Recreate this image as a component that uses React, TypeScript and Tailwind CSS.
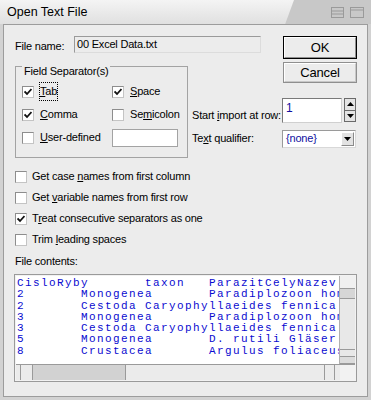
import type { ReactNode } from "react";

const rows = [
  "CisloRyby       taxon   ParazitCelyNazev",
  "2       Monogenea       Paradiplozoon homoion",
  "2       Cestoda Caryophyllaeides fennica",
  "3       Monogenea       Paradiplozoon homoion",
  "3       Cestoda Caryophyllaeides fennica",
  "5       Monogenea       D. rutili Gläser",
  "8       Crustacea       Argulus foliaceus",
];

function Check({ checked }: { checked?: boolean }) {
  return (
    <span className="flex h-[12px] w-[12px] shrink-0 items-center justify-center border border-t-[#8d8d8d] border-l-[#8d8d8d] border-r-[#c4c4c4] border-b-[#c4c4c4] bg-white">
      {checked ? (
        <svg width="8" height="8" viewBox="0 0 8 8">
          <path d="M0.5 3.5 L3 6 L7.5 1" fill="none" stroke="#111" strokeWidth="1.8" />
        </svg>
      ) : null}
    </span>
  );
}

function U({ children }: { children: ReactNode }) {
  return <span className="underline underline-offset-[1px]">{children}</span>;
}

function Button({ children, def }: { children: ReactNode; def?: boolean }) {
  return (
    <div
      className={
        def
          ? "flex h-[23px] w-[74px] items-center justify-center border border-black bg-[#ececec] text-[13px]"
          : "flex h-[21px] w-[74px] items-center justify-center border border-[#8f8f8f] bg-[#ececec] text-[13px]"
      }
    >
      <div
        className={
          def
            ? "flex h-full w-full items-center justify-center border border-t-white border-l-white border-r-[#8f8f8f] border-b-[#8f8f8f]"
            : "flex h-full w-full items-center justify-center border border-t-white border-l-white border-r-[#c8c8c8] border-b-[#c8c8c8]"
        }
      >
        {children}
      </div>
    </div>
  );
}

export default function App() {
  return (
    <div className="flex h-[400px] w-[371px] flex-col overflow-hidden bg-[#d2d2d2] font-['Liberation_Sans',Arial,sans-serif] text-[11px] tracking-[-0.2px] text-black">
      {/* title bar */}
      <div className="flex h-[24px] shrink-0 bg-[#c8c8c8]">
        <div className="flex w-[294px] items-center bg-gradient-to-b from-[#f4f4f4] to-[#e0e0e0] pl-[7px] text-[12.5px] tracking-normal [clip-path:polygon(0_0,100%_0,97%_100%,0_100%)]">
          Open Text File
        </div>
        <div className="flex flex-1 items-center justify-end gap-[6px] pr-[7px] pt-[1px]">
          <svg width="13" height="11" viewBox="0 0 13 11">
            <rect x="0.5" y="0.5" width="12" height="10" fill="none" stroke="#9a9a9a" />
            <path d="M0.5 4 H12.5 M0.5 7 H12.5" stroke="#9a9a9a" />
          </svg>
          <svg width="14" height="11" viewBox="0 0 14 11">
            <rect x="0.5" y="0.5" width="13" height="10" fill="none" stroke="#9a9a9a" />
            <path d="M0.5 3 H13.5" stroke="#9a9a9a" />
          </svg>
        </div>
      </div>

      {/* body */}
      <div className="mx-[3px] mb-[3px] flex flex-1 flex-col border border-[#9c9c9c] bg-[#ececec] pl-[11px] pr-[10px] pt-[11px]">
        <div className="flex items-start">
          <span className="w-[59px] pt-[2px]">File name:</span>
          <div className="flex h-[17px] w-[187px] items-center border border-t-[#9a9a9a] border-l-[#9a9a9a] border-r-[#dcdcdc] border-b-[#dcdcdc] bg-[#ececec] pl-[2px]">
            00 Excel Data.txt
          </div>
          <div className="ml-auto">
            <Button def>OK</Button>
          </div>
        </div>

        <div className="flex">
          {/* group box */}
          <div className="relative mt-[7px] h-[92px] w-[173px] border border-[#a3a3a3] pl-[6px] pt-[13px]">
            <span className="absolute left-[6px] top-[-2px] bg-[#ececec] px-[2px] leading-[12px]">
              Field Separator(s)
            </span>
            <div className="grid grid-cols-[90px_auto]">
              <div className="flex h-[23px] items-center gap-[6px]">
                <Check checked />
                <span className="outline outline-1 outline-dotted outline-offset-0 outline-black">
                  <U>T</U>ab
                </span>
              </div>
              <div className="flex h-[23px] items-center gap-[6px]">
                <Check checked />
                <span>
                  <U>S</U>pace
                </span>
              </div>
              <div className="flex h-[23px] items-center gap-[6px]">
                <Check checked />
                <span>
                  <U>C</U>omma
                </span>
              </div>
              <div className="flex h-[23px] items-center gap-[6px]">
                <Check />
                <span>
                  Se<U>m</U>icolon
                </span>
              </div>
              <div className="flex h-[23px] items-center gap-[6px]">
                <Check />
                <span>
                  <U>U</U>ser-defined
                </span>
              </div>
              <div className="flex h-[23px] items-center">
                <div className="h-[18px] w-[66px] border border-[#a3a3a3] bg-white" />
              </div>
            </div>
          </div>

          {/* right column */}
          <div className="flex flex-1 flex-col">
            <div className="mt-[3px] self-end">
              <Button>Cancel</Button>
            </div>
            <div className="ml-[4px] mt-[15px] flex items-start">
              <span className="w-[90px] whitespace-nowrap pt-[9px]">
                Start <U>i</U>mport at row:
              </span>
              <div className="h-[25px] w-[60px] border border-t-[#7a7a7a] border-l-[#7a7a7a] border-r-[#d0d0d0] border-b-[#d0d0d0] bg-white pl-[3px] text-[12px] text-[#1010a0]">
                1
              </div>
              <div className="ml-[2px] flex h-[24px] w-[12px] flex-col border border-[#6a6a6a] bg-[#e4e4e4]">
                <div className="flex flex-1 items-center justify-center border-b border-[#6a6a6a]">
                  <svg width="7" height="4" viewBox="0 0 7 4">
                    <path d="M0 4 L3.5 0 L7 4 Z" fill="#000" />
                  </svg>
                </div>
                <div className="flex flex-1 items-center justify-center">
                  <svg width="7" height="4" viewBox="0 0 7 4">
                    <path d="M0 0 L3.5 4 L7 0 Z" fill="#000" />
                  </svg>
                </div>
              </div>
            </div>
            <div className="ml-[4px] mt-[6px] flex items-center">
              <span className="w-[90px] whitespace-nowrap">
                Te<U>x</U>t qualifier:
              </span>
              <div className="flex h-[18px] w-[74px] items-center border border-t-[#9a9a9a] border-l-[#9a9a9a] border-r-[#d8d8d8] border-b-[#d8d8d8] bg-white">
                <span className="flex-1 pl-[3px] text-[#1010a0]">{"{none}"}</span>
                <div className="mr-[1px] flex h-[14px] w-[13px] items-center justify-center border border-t-white border-l-white border-r-[#8a8a8a] border-b-[#8a8a8a] bg-[#e2e2e2]">
                  <svg width="7" height="4" viewBox="0 0 7 4">
                    <path d="M0 0 L3.5 4 L7 0 Z" fill="#000" />
                  </svg>
                </div>
              </div>
            </div>
          </div>
        </div>

        {/* option checkboxes */}
        <div className="mt-[8px] flex flex-col">
          <div className="flex h-[21px] items-center gap-[5px]">
            <Check />
            <span>
              Get case <U>n</U>ames from first column
            </span>
          </div>
          <div className="flex h-[21px] items-center gap-[5px]">
            <Check />
            <span>
              Get <U>v</U>ariable names from first row
            </span>
          </div>
          <div className="flex h-[21px] items-center gap-[5px]">
            <Check checked />
            <span>
              T<U>r</U>eat consecutive separators as one
            </span>
          </div>
          <div className="flex h-[21px] items-center gap-[5px]">
            <Check />
            <span>
              Trim <U>l</U>eading spaces
            </span>
          </div>
        </div>

        <div className="mt-[4px] leading-[14px]">File contents:</div>

        {/* file contents */}
        <div className="-ml-[1px] mt-[6px] flex h-[108px] w-[343px] flex-col border border-[#9a9a9a] bg-[#f2f2f2] p-[1px]">
          <div className="flex flex-1">
            <div className="flex-1 overflow-hidden bg-white pl-[1px] pt-[2px] font-['Liberation_Mono','Courier_New',monospace] text-[11px] leading-[11.3px] tracking-[1.4px] text-[#0a0ad0] whitespace-pre">
              {rows.map((r, i) => (
                <div key={i}>{r}</div>
              ))}
            </div>
            <div className="flex w-[16px] flex-col border-l border-[#b0b0b0] bg-[#e8e8e8]">
              <div className="h-[13px] border-b border-[#9a9a9a] bg-[#f0f0f0]" />
              <div className="h-[10px] border-b border-[#9a9a9a] bg-[#d6d6d6]" />
              <div className="flex-1" />
              <div className="h-[7px] border-t border-[#9a9a9a]" />
              <div className="h-[8px] border-t border-b border-[#9a9a9a] bg-[#dcdcdc]" />
            </div>
          </div>
          <div className="flex h-[16px] border-t border-[#9a9a9a]">
            <div className="flex w-[324px] bg-[#ebebeb]">
              <div className="w-[5px] border-r border-[#9a9a9a]" />
              <div className="w-[12px] border-r border-[#9a9a9a]" />
              <div className="w-[93px] border-r border-[#9a9a9a] bg-[#d2d2d2]" />
              <div className="flex-1 border-r border-[#9a9a9a]" />
              <div className="w-[10px] border-r border-[#9a9a9a]" />
              <div className="w-[5px]" />
            </div>
            <div className="flex-1 bg-[#f2f2f2]" />
          </div>
        </div>
      </div>
    </div>
  );
}
